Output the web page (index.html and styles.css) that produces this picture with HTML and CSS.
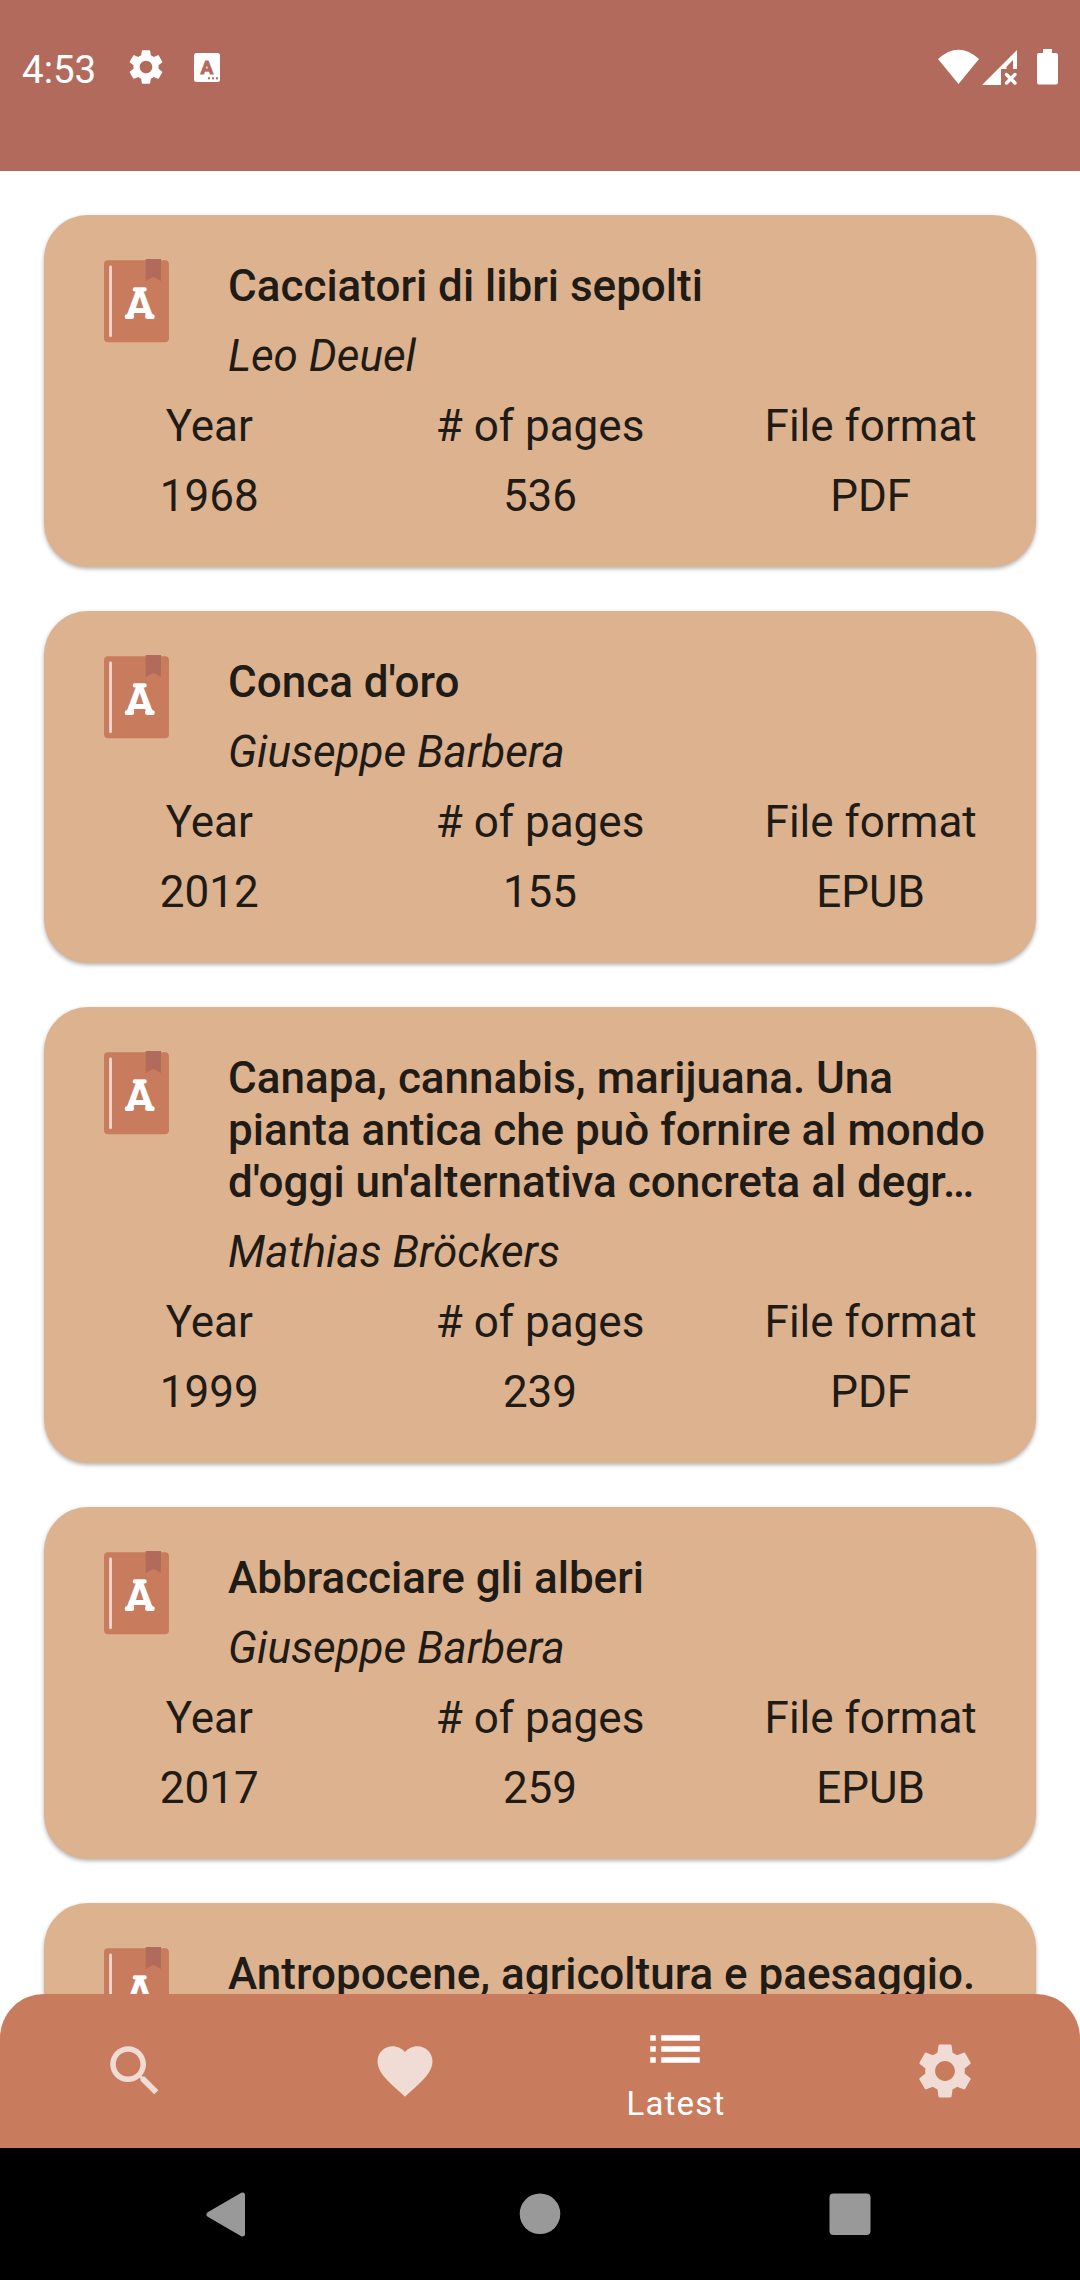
FILE: index.html
```html
<!DOCTYPE html>
<html lang="it">
<head>
<meta charset="utf-8">
<title>Latest books</title>
<link rel="stylesheet" href="styles.css">
</head>
<body>
<svg class="defs" aria-hidden="true">
  <symbol id="gear" viewBox="0 0 24 24"><path d="M19.14 12.94c.04-.3.06-.61.06-.94 0-.32-.02-.64-.07-.94l2.03-1.58c.18-.14.23-.41.12-.61l-1.92-3.32c-.12-.22-.37-.29-.59-.22l-2.39.96c-.5-.38-1.03-.7-1.62-.94l-.36-2.54c-.04-.24-.24-.41-.48-.41h-3.84c-.24 0-.43.17-.47.41l-.36 2.54c-.59.24-1.13.57-1.62.94l-2.39-.96c-.22-.08-.47 0-.59.22L2.74 8.87c-.12.21-.08.47.12.61l2.03 1.58c-.05.3-.09.63-.09.94s.02.64.07.94l-2.03 1.58c-.18.14-.23.41-.12.61l1.92 3.32c.12.22.37.29.59.22l2.39-.96c.5.38 1.03.7 1.62.94l.36 2.54c.05.24.24.41.48.41h3.84c.24 0 .44-.17.47-.41l.36-2.54c.59-.24 1.13-.56 1.62-.94l2.39.96c.22.08.47 0 .59-.22l1.92-3.32c.12-.22.07-.47-.12-.61l-2.01-1.58zM12 15.6c-1.98 0-3.6-1.62-3.6-3.6s1.62-3.6 3.6-3.6 3.6 1.62 3.6 3.6-1.62 3.6-3.6 3.6z"/></symbol>
  <symbol id="book" viewBox="0 0 66 84">
    <rect x="0" y="1.3" width="65" height="82" rx="4" fill="#c87b5d"/>
    <path d="M41.7 0h15.3v22l-7.6-4.3-7.7 4.3z" fill="#b26a5d"/>
    <rect x="5.2" y="6.5" width="2.700" height="71.500" rx="1.300" fill="#f1dcd5"/>
    <g fill="#fff"><rect x="28.700" y="28.300" width="14" height="4.200" rx="2"/><rect x="20.700" y="55.300" width="9.500" height="4.400" rx="2"/><rect x="41" y="55.300" width="9.700" height="4.400" rx="2"/></g>
  </symbol>
</svg>
<div class="screen">
  <header class="status">
    <div class="status-left">
      <span class="clock">4:53</span>
      <svg class="status-gear"><use href="#gear"/></svg>
      <svg class="status-a" viewBox="0 0 26 29"><rect width="26" height="29" rx="2.500" fill="#fff"/><text x="13" y="21.200" text-anchor="middle">A</text><g fill="#b26a5d"><rect x="14" y="24.300" width="2" height="2"/><rect x="18" y="24.300" width="2" height="2"/><rect x="22" y="24.300" width="2" height="2"/></g></svg>
    </div>
    <svg class="status-right" viewBox="0 0 122 38" fill="#fff">
      <path d="M0 11Q20.500-7.500 41 11L20.500 36z"/>
      <path d="M44 37L79 2V21H75V12L68.500 18.800V21H63V37z"/>
      <path d="M68.500 26.500l8.500 8.500M77 26.500l-8.500 8.500" stroke="#fff" stroke-width="3.400" stroke-linecap="round"/>
      <path d="M105 1h9v4h4q2 0 2 2v27.500q0 2-2 2h-17q-2 0-2-2V7q0-2 2-2h4z"/>
    </svg>
  </header>

  <main class="list">
    <article class="card">
      <div class="head"><svg class="book"><use href="#book"/><text class="book-letter" x="35.700" y="59.600" text-anchor="middle">A</text></svg><div class="names"><h2>Cacciatori di libri sepolti</h2><p>Leo Deuel</p></div></div>
      <dl class="facts"><div><dt>Year</dt><dd>1968</dd></div><div><dt># of pages</dt><dd>536</dd></div><div><dt>File format</dt><dd>PDF</dd></div></dl>
    </article>
    <article class="card">
      <div class="head"><svg class="book"><use href="#book"/><text class="book-letter" x="35.700" y="59.600" text-anchor="middle">A</text></svg><div class="names"><h2>Conca d'oro</h2><p>Giuseppe Barbera</p></div></div>
      <dl class="facts"><div><dt>Year</dt><dd>2012</dd></div><div><dt># of pages</dt><dd>155</dd></div><div><dt>File format</dt><dd>EPUB</dd></div></dl>
    </article>
    <article class="card">
      <div class="head"><svg class="book"><use href="#book"/><text class="book-letter" x="35.700" y="59.600" text-anchor="middle">A</text></svg><div class="names"><h2>Canapa, cannabis, marijuana. Una<br>pianta antica che può fornire al mondo<br>d'oggi un'alternativa concreta al degr…</h2><p>Mathias Bröckers</p></div></div>
      <dl class="facts"><div><dt>Year</dt><dd>1999</dd></div><div><dt># of pages</dt><dd>239</dd></div><div><dt>File format</dt><dd>PDF</dd></div></dl>
    </article>
    <article class="card">
      <div class="head"><svg class="book"><use href="#book"/><text class="book-letter" x="35.700" y="59.600" text-anchor="middle">A</text></svg><div class="names"><h2>Abbracciare gli alberi</h2><p>Giuseppe Barbera</p></div></div>
      <dl class="facts"><div><dt>Year</dt><dd>2017</dd></div><div><dt># of pages</dt><dd>259</dd></div><div><dt>File format</dt><dd>EPUB</dd></div></dl>
    </article>
    <article class="card">
      <div class="head"><svg class="book"><use href="#book"/><text class="book-letter" x="35.700" y="59.600" text-anchor="middle">A</text></svg><div class="names"><h2>Antropocene, agricoltura e paesaggio.</h2></div></div>
    </article>
  </main>

  <nav class="tabs">
    <div class="tab"><svg viewBox="0 0 24 24"><path d="M15.500 14h-.79l-.28-.27C15.410 12.590 16 11.110 16 9.500 16 5.910 13.090 3 9.500 3S3 5.910 3 9.500 5.910 16 9.500 16c1.610 0 3.090-.59 4.230-1.570l.27.28v.79l5 4.990L20.490 19l-4.990-5zm-6 0C7.010 14 5 11.990 5 9.500S7.010 5 9.500 5 14 7.010 14 9.500 11.990 14 9.500 14z"/></svg></div>
    <div class="tab"><svg viewBox="0 0 24 24"><path d="M12 21.350l-1.450-1.320C5.400 15.360 2 12.280 2 8.500 2 5.420 4.420 3 7.500 3c1.740 0 3.410.81 4.500 2.090C13.090 3.810 14.760 3 16.500 3 19.580 3 22 5.420 22 8.500c0 3.780-3.400 6.860-8.550 11.540L12 21.350z"/></svg></div>
    <div class="tab active"><svg viewBox="0 0 24 24"><path d="M3 13h2v-2H3v2zm0 4h2v-2H3v2zm0-8h2V7H3v2zm4 4h14v-2H7v2zm0 4h14v-2H7v2zM7 7v2h14V7H7z"/></svg><span>Latest</span></div>
    <div class="tab"><svg><use href="#gear"/></svg></div>
  </nav>

  <footer class="system">
    <svg viewBox="0 0 46 46"><path d="M6 23.500L39.500 4V43z" stroke="#999" stroke-width="5" stroke-linejoin="round"/></svg>
    <svg class="home" viewBox="0 0 46 46"><circle cx="23" cy="22.800" r="20.300"/></svg>
    <svg viewBox="0 0 46 46"><rect x="2.500" y="2.500" width="41" height="41.500" rx="4"/></svg>
  </footer>
</div>
</body>
</html>
```
FILE: styles.css
```css
* { box-sizing: border-box; margin: 0; padding: 0; }
body { width: 1080px; height: 2280px; overflow: hidden; font-family: Roboto, sans-serif; color: #1f1b16; background: #fff; }
svg { display: block; flex: none; }
.defs { position: absolute; width: 0; height: 0; }
.screen { display: flex; flex-direction: column; height: 2280px; }

.status { flex: none; height: 171px; padding: 48px 20px 0 22px; display: flex; justify-content: space-between; align-items: flex-start; background: #b26a5d; color: #fff; }
.status-left { display: flex; align-items: center; height: 38px; }
.clock { width: 76px; font-size: 38.5px; line-height: 45px; padding-top: 4px; }
.status-gear { width: 42px; height: 42px; margin-left: 27px; fill: #fff; }
.status-a { width: 26px; height: 29px; margin-left: 27px; }
.status-a text { font: 700 19px Roboto, sans-serif; fill: #b26a5d; stroke: #b26a5d; stroke-width: .8px; }
.status-right { width: 122px; height: 38px; }

.list { flex: 1; min-height: 0; margin-bottom: -44px; padding: 44px 44px 0; overflow: hidden; display: flex; flex-direction: column; gap: 44px; }
.card { flex: none; padding: 44px 0; border-radius: 44px; background: #ddb28f; box-shadow: 0 2px 4px rgba(0, 0, 0, .3); }
.head { display: flex; gap: 59px; padding: 0 44px 18px 60px; }
.book { width: 66px; height: 84px; }
.book-letter { font: 700 43px Roboto, sans-serif; fill: #fff; }
.names { display: flex; flex-direction: column; gap: 18px; margin: 1px 0 0 -1px; }
h2, p, dt, dd { font-size: 44px; line-height: 52px; font-weight: 400; white-space: nowrap; }
h2 { font-weight: 500; }
p { font-style: italic; }
.facts { display: grid; grid-template-columns: repeat(3, 1fr); padding-bottom: 1px; text-align: center; }
.facts div { display: flex; flex-direction: column; gap: 18px; }

.tabs { position: relative; flex: none; height: 154px; display: grid; grid-template-columns: repeat(4, 1fr); border-radius: 44px 44px 0 0; background: #c87b5d; }
.tab { display: flex; flex-direction: column; align-items: center; justify-content: center; }
.tab svg { width: 66px; height: 66px; fill: #f1dcd5; }
.tab.active { justify-content: flex-start; padding-top: 22px; color: #fff; }
.tab.active svg { fill: #fff; }
.tab span { padding: 2px 0 0 2px; font-size: 33px; line-height: 40px; letter-spacing: 1.2px; }

.system { position: relative; flex: none; height: 132px; padding: 0 207px 0 203px; display: flex; justify-content: space-between; align-items: center; background: #000; }
.system svg { width: 46px; height: 46px; fill: #999; }
.system .home { margin-left: 4px; }
```
